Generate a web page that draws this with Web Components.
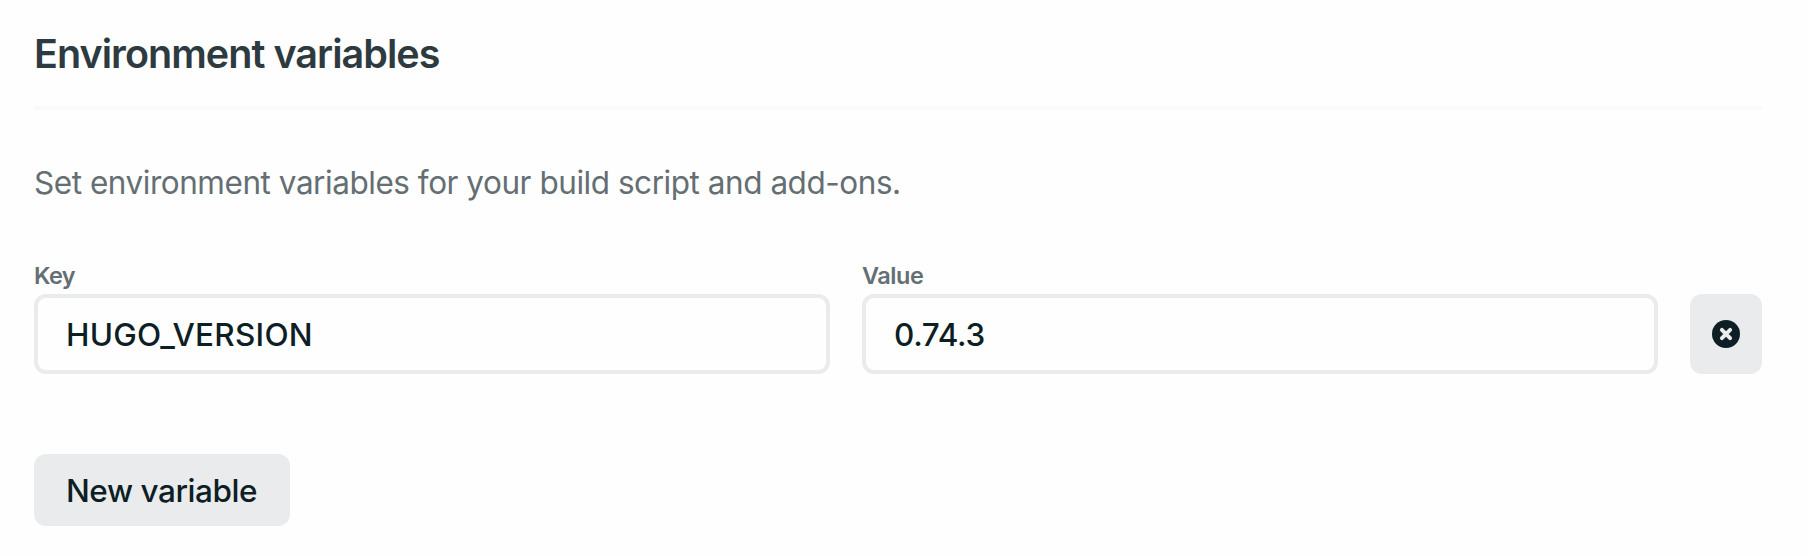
<!DOCTYPE html>
<html lang="en">
<head>
<meta charset="utf-8">
<title>Environment variables</title>
<style>
body { margin: 0; background: #fefefe; font-family: Inter, "Liberation Sans", sans-serif; color: #0e1e25; }
</style>
</head>
<body>
<env-panel>
  <span slot="title">Environment variables</span>
  <span slot="intro">Set environment variables for your build script and add-ons.</span>
  <env-row>
    <text-field label="Key" value="HUGO_VERSION" style="--label-spacing:-.7px;--value-spacing:.24px"></text-field>
    <text-field label="Value" value="0.74.3" style="--label-spacing:-.45px;--value-spacing:-.3px"></text-field>
    <remove-button></remove-button>
  </env-row>
  <add-button>New variable</add-button>
</env-panel>
<script>
class BaseElement extends HTMLElement {
  constructor() {
    super();
    this.attachShadow({ mode: 'open' });
  }
  connectedCallback() {
    this.shadowRoot.innerHTML = this.template();
  }
}

customElements.define('env-panel', class extends BaseElement {
  template() {
    return `<style>
      :host { display: block; box-sizing: border-box; padding: 30px 46px 30px 34px; }
      h2 { margin: 0; padding-bottom: 28px; border-bottom: 4px solid #f9fafa; font-size: 39.5px; line-height: 48px; font-weight: 600; letter-spacing: -.96px; color: #2d3b41; }
      p { margin: 49px 0 51px; font-size: 31.5px; line-height: 48px; font-weight: 400; letter-spacing: -.46px; color: #646e73; }
    </style>
    <h2><slot name="title"></slot></h2>
    <p><slot name="intro"></slot></p>
    <slot></slot>`;
  }
});

customElements.define('env-row', class extends BaseElement {
  template() {
    return `<style>
      :host { display: grid; grid-template-columns: 1fr 1fr 72px; column-gap: 32px; align-items: end; margin-bottom: 80px; }
    </style><slot></slot>`;
  }
});

customElements.define('text-field', class extends BaseElement {
  template() {
    return `<style>
      :host { display: block; }
      .label { font-size: 23.5px; line-height: 36px; font-weight: 600; letter-spacing: var(--label-spacing); color: #646e73; }
      .box { box-sizing: border-box; height: 80px; border: 4px solid #e9ebec; border-radius: 12px; padding: 0 28px; background: #fefefe; font-size: 31.5px; line-height: 74px; font-weight: 500; letter-spacing: var(--value-spacing); }
    </style>
    <div class="label">${this.getAttribute('label')}</div>
    <div class="box">${this.getAttribute('value')}</div>`;
  }
});

customElements.define('remove-button', class extends BaseElement {
  template() {
    return `<style>
      :host { display: block; }
      button { display: flex; align-items: center; justify-content: center; width: 72px; height: 80px; padding: 0; border: 0; border-radius: 12px; background: #e9ebec; color: #0e1e25; }
      svg { display: block; }
    </style>
    <button aria-label="Remove variable"><svg width="28" height="28" viewBox="0 0 28 28"><circle cx="14" cy="14" r="14" fill="currentColor"/><path d="M9.9 9.9l8.2 8.2M18.1 9.9l-8.2 8.2" stroke="#e9ebec" stroke-width="4" stroke-linecap="round"/></svg></button>`;
  }
});

customElements.define('add-button', class extends BaseElement {
  template() {
    return `<style>
      :host { display: block; }
      button { display: block; width: 256px; height: 72px; padding: 2px 32px 0; border: 0; border-radius: 12px; background: #e9ebec; color: #0e1e25; font: 500 31.5px/70px Inter, "Liberation Sans", sans-serif; letter-spacing: -.45px; text-align: left; white-space: nowrap; }
    </style>
    <button><slot></slot></button>`;
  }
});
</script>
</body>
</html>
